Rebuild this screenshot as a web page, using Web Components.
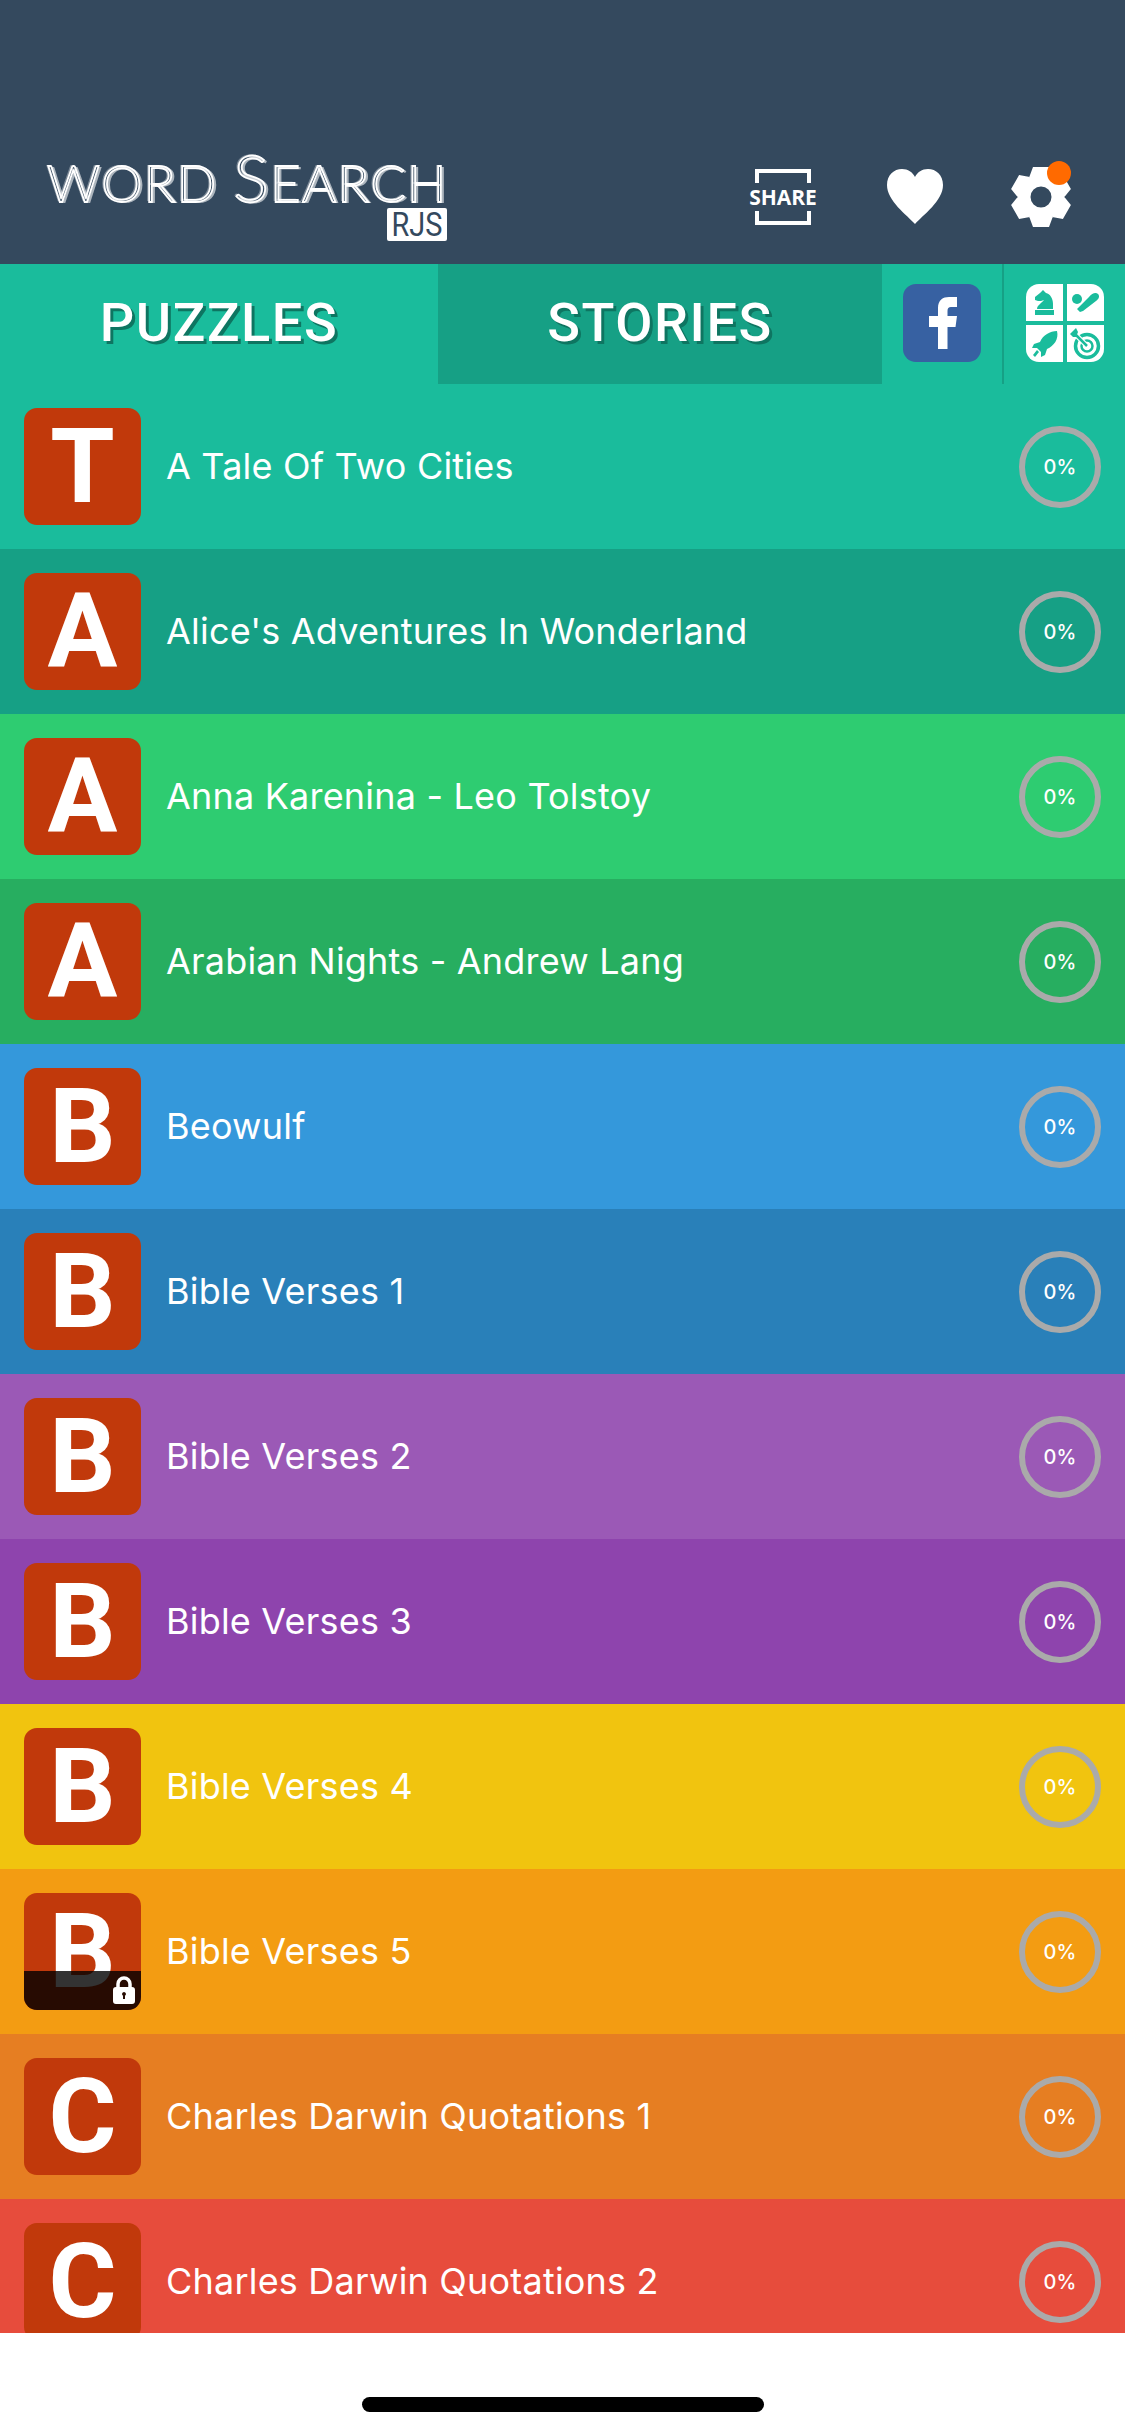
<!DOCTYPE html>
<html lang="en">
<head>
<meta charset="utf-8">
<title>Word Search RJS</title>
<style>
  html, body { margin: 0; padding: 0; background: #fff; }
  body { font-family: Inter, "Liberation Sans", sans-serif; }
</style>
</head>
<body>
<ws-app>
  <ws-header></ws-header>
  <ws-tabs></ws-tabs>
  <ws-list>
    <ws-row letter="T" color="#1abc9c" title="A Tale Of Two Cities"></ws-row>
    <ws-row letter="A" color="#16a085" title="Alice's Adventures In Wonderland"></ws-row>
    <ws-row letter="A" color="#2ecc71" title="Anna Karenina - Leo Tolstoy"></ws-row>
    <ws-row letter="A" color="#27ae60" title="Arabian Nights - Andrew Lang"></ws-row>
    <ws-row letter="B" color="#3498db" title="Beowulf"></ws-row>
    <ws-row letter="B" color="#2980b9" title="Bible Verses 1"></ws-row>
    <ws-row letter="B" color="#9b59b6" title="Bible Verses 2"></ws-row>
    <ws-row letter="B" color="#8e44ad" title="Bible Verses 3"></ws-row>
    <ws-row letter="B" color="#f1c40f" title="Bible Verses 4"></ws-row>
    <ws-row letter="B" color="#f39c12" title="Bible Verses 5" locked></ws-row>
    <ws-row letter="C" color="#e67e22" title="Charles Darwin Quotations 1"></ws-row>
    <ws-row letter="C" color="#e74c3c" title="Charles Darwin Quotations 2"></ws-row>
  </ws-list>
  <ws-home-bar></ws-home-bar>
</ws-app>

<script>
// small helper so every component reads the same
function shadow(el, html) {
  el.attachShadow({ mode: 'open' }).innerHTML = html;
}

class WsApp extends HTMLElement {
  connectedCallback() {
    shadow(this, `
      <style>
        :host { display: flex; flex-direction: column; width: 1125px; height: 2436px; overflow: hidden; }
      </style>
      <slot></slot>
    `);
  }
}

// six toothed cog, built from polar points
function gearPath(cx, cy, outer, inner, hole) {
  let d = '';
  for (let i = 0; i < 6; i++) {
    const a = (i * 60 - 90) * Math.PI / 180;
    const pts = [[-31, inner], [-15, outer], [15, outer], [31, inner]];
    pts.forEach(([off, r], j) => {
      const t = a + off * Math.PI / 180;
      d += `${i === 0 && j === 0 ? 'M' : 'L'}${(cx + r * Math.cos(t)).toFixed(1)} ${(cy + r * Math.sin(t)).toFixed(1)} `;
    });
  }
  d += `Z M${cx - hole} ${cy} a${hole} ${hole} 0 1 0 ${hole * 2} 0 a${hole} ${hole} 0 1 0 ${-hole * 2} 0 Z`;
  return d;
}

class WsHeader extends HTMLElement {
  connectedCallback() {
    shadow(this, `
      <style>
        :host { display: flex; flex: none; box-sizing: border-box; height: 264px; background: #34495e; padding: 0 0 23px 47px; align-items: flex-end; }
        .logo { display: flex; flex-direction: column; align-items: flex-end; flex: none; width: 400px; }
        .word { align-self: flex-start; height: 52px; font: 300 52px/52px Lato, sans-serif; color: transparent; -webkit-text-stroke: 1.8px #fff; text-shadow: 3px 1px 0 rgba(255,255,255,.6), -2px -1px 0 rgba(255,255,255,.35); white-space: nowrap; letter-spacing: 1.5px; }
        .word b { font-weight: 300; font-size: 66px; line-height: 0; }
        .rjs { box-sizing: border-box; width: 60px; height: 33px; background: #fff; color: #34495e; border-radius: 2px; display: flex; align-items: center; justify-content: center; font: 400 34px/33px Roboto, sans-serif; }
        .rjs span { display: block; transform: scaleX(.85); }
        .icons { display: flex; align-items: center; flex: none; margin-left: 303px; height: 62px; margin-bottom: 13px; }
        .share { position: relative; width: 66px; height: 56px; display: flex; align-items: center; justify-content: center; color: #fff; font: 700 21px/1 "Open Sans", sans-serif; }
        .share svg { position: absolute; left: 5px; top: 0; }
        .heart { margin-left: 71px; }
        .gear { position: relative; margin-left: 68px; width: 60px; height: 62px; }
        .dot { position: absolute; left: 36px; top: -5px; width: 24px; height: 24px; border-radius: 50%; background: #ff6a00; }
      </style>
      <div class="logo">
        <div class="word">WORD <b>S</b>EARCH</div>
        <div class="rjs"><span>RJS</span></div>
      </div>
      <div class="icons">
        <div class="share">
          <svg width="56" height="56" viewBox="0 0 56 56" fill="none" stroke="#fff" stroke-width="4">
            <path d="M2 14V2H54V14M2 42V54H54V42"/>
          </svg>
          <span>SHARE</span>
        </div>
        <svg class="heart" width="56" height="56" viewBox="0 0 56 56">
          <path fill="#fff" d="M28 55 C20 46 0 32 0 16 C0 6 7 0 15 0 C21 0 25.500 3 28 8 C30.500 3 35 0 41 0 C49 0 56 6 56 16 C56 32 36 46 28 55 Z"/>
        </svg>
        <div class="gear">
          <svg width="60" height="62" viewBox="0 0 60 62">
            <path fill="#fff" fill-rule="evenodd" d="${gearPath(30, 31, 31, 23, 10.500)}"/>
          </svg>
          <div class="dot"></div>
        </div>
      </div>
    `);
  }
}

class WsTabs extends HTMLElement {
  connectedCallback() {
    shadow(this, `
      <style>
        :host { display: flex; flex: none; height: 120px; background: #1abc9c; }
        .tab { display: flex; flex: none; align-items: center; justify-content: center; color: #fff; font: 500 54px/1 Roboto, sans-serif; letter-spacing: 1.6px; text-shadow: 3px 3px 0 #0e7561; padding-bottom: 2px; box-sizing: border-box; }
        .puzzles { width: 438px; }
        .stories { width: 444px; background: #16a085; }
        .fb { flex: none; width: 122px; box-sizing: border-box; border-right: 2px solid #16a085; display: flex; align-items: center; justify-content: center; padding-bottom: 3px; }
        .games { flex: 1; display: flex; align-items: center; padding: 0 0 3px 22px; }
      </style>
      <div class="tab puzzles">PUZZLES</div>
      <div class="tab stories">STORIES</div>
      <div class="fb">
        <svg width="78" height="78" viewBox="0 0 78 78">
          <rect width="78" height="78" rx="13" fill="#3761a2"/>
          <path fill="#fff" d="M35 65V43H26V32H35V24C35 16 40 13 46 13H54V23H48C45.500 23 44.500 24.500 44.500 27V32H54L52.500 43H44.500V65Z"/>
        </svg>
      </div>
      <div class="games">
        <svg width="78" height="78" viewBox="0 0 78 78">
          <path fill="#fff" d="M13 0H37V37H0V13A13 13 0 0 1 13 0Z"/>
          <path fill="#fff" d="M41 0H65A13 13 0 0 1 78 13V37H41Z"/>
          <path fill="#fff" d="M0 41H37V78H13A13 13 0 0 1 0 65Z"/>
          <path fill="#fff" d="M41 41H78V65A13 13 0 0 1 65 78H41Z"/>
          <g fill="#1abc9c">
            <!-- knight -->
            <path d="M17 6L20 9C24 10 27 14 27 20V25H11C11 21 16 19 18 16C16 17 14 17 12 17L9 16V13L14 9Z"/>
            <rect x="9" y="26" width="19" height="5"/>
            <!-- ball and bat -->
            <circle cx="51" cy="15" r="5"/>
            <path d="M54 28L51 25L63 13C66 9 70 8 72 10C74 12 73 15 70 17L57 27Z"/>
            <!-- rocket -->
            <path d="M31 47C24 47 17 51 14 58L8 60L6 64L11 64L15 68L15 73L19 71L21 65C28 62 33 55 31 47Z"/>
            <path d="M7 71L11 66L13 68L9 73Z"/>
            <!-- target with arrow -->
            <circle cx="61" cy="62" r="11.500" fill="none" stroke="#1abc9c" stroke-width="3.500"/>
            <circle cx="61" cy="62" r="5.500" fill="none" stroke="#1abc9c" stroke-width="2.500"/>
            <path d="M47 48L61 62" stroke="#fff" stroke-width="5" fill="none"/>
            <path d="M49 50L61 62" stroke="#1abc9c" stroke-width="2.500" fill="none"/>
            <path d="M44 50L50 44L52 48L50 53L47 53Z"/>
          </g>
        </svg>
      </div>
    `);
  }
}

class WsList extends HTMLElement {
  connectedCallback() {
    shadow(this, `
      <style>
        :host { display: block; flex: 1; min-height: 0; overflow: hidden; }
      </style>
      <slot></slot>
    `);
  }
}

class WsLetterTile extends HTMLElement {
  connectedCallback() {
    const locked = this.hasAttribute('locked');
    shadow(this, `
      <style>
        :host { display: flex; flex: none; position: relative; width: 117px; height: 117px; border-radius: 13px; background: #c1390b; align-items: center; justify-content: center; color: #fff; font: 700 104px/1 Roboto, "Liberation Sans", sans-serif; }
        .shade { position: absolute; left: 0; right: 0; bottom: 0; height: 39px; border-radius: 0 0 13px 13px; background: rgba(0,0,0,.8); }
        svg { position: absolute; right: 6px; bottom: 6px; }
      </style>
      <span>${this.getAttribute('letter')}</span>
      ${locked ? `<div class="shade"></div>
      <svg width="22" height="28" viewBox="0 0 22 28">
        <path fill="none" stroke="#fff" stroke-width="3.500" d="M5 13V8A6 6 0 0 1 17 8V13"/>
        <path fill="#fff" fill-rule="evenodd" d="M3 11H19A3 3 0 0 1 22 14V25A3 3 0 0 1 19 28H3A3 3 0 0 1 0 25V14A3 3 0 0 1 3 11ZM11 16A2 2 0 0 0 10 19.700V23H12V19.700A2 2 0 0 0 11 16Z"/>
      </svg>` : ''}
    `);
  }
}

class WsProgress extends HTMLElement {
  connectedCallback() {
    shadow(this, `
      <style>
        :host { display: flex; flex: none; position: relative; box-sizing: border-box; width: 82px; height: 82px; border: 6.500px solid #aaa; border-radius: 50%; align-items: center; justify-content: center; color: #fff; font: 500 20px/1 Inter, sans-serif; }
      </style>
      <span>${this.getAttribute('value') || '0'}%</span>
    `);
  }
}

class WsRow extends HTMLElement {
  connectedCallback() {
    const locked = this.hasAttribute('locked') ? 'locked' : '';
    shadow(this, `
      <style>
        :host { display: flex; box-sizing: border-box; height: 165px; padding: 0 24px; align-items: center; background: ${this.getAttribute('color')}; }
        .title { flex: 1; margin-left: 25px; padding-bottom: 2px; color: #fff; font: 400 36px/1 Inter, sans-serif; letter-spacing: .2px; white-space: nowrap; }
      </style>
      <ws-letter-tile letter="${this.getAttribute('letter')}" ${locked}></ws-letter-tile>
      <div class="title">${this.getAttribute('title')}</div>
      <ws-progress value="0"></ws-progress>
    `);
  }
}

class WsHomeBar extends HTMLElement {
  connectedCallback() {
    shadow(this, `
      <style>
        :host { display: flex; height: 103px; flex: none; background: #fff; justify-content: center; padding-top: 64px; box-sizing: border-box; }
        div { width: 402px; height: 15px; border-radius: 8px; background: #000; }
      </style>
      <div></div>
    `);
  }
}

customElements.define('ws-app', WsApp);
customElements.define('ws-header', WsHeader);
customElements.define('ws-tabs', WsTabs);
customElements.define('ws-list', WsList);
customElements.define('ws-letter-tile', WsLetterTile);
customElements.define('ws-progress', WsProgress);
customElements.define('ws-row', WsRow);
customElements.define('ws-home-bar', WsHomeBar);
</script>
</body>
</html>
